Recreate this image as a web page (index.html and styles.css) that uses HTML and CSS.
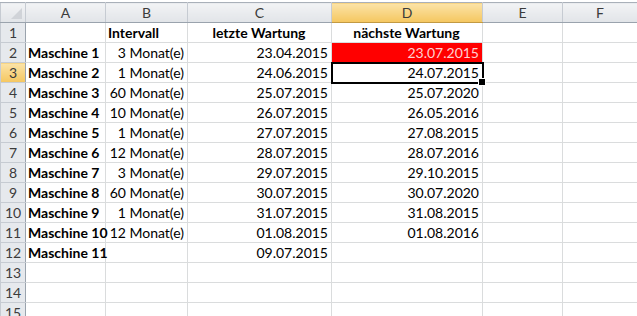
FILE: index.html
```html
<!DOCTYPE html>
<html lang="de">
<head>
    <meta charset="UTF-8">
    <title>Wartung</title>
    <link rel="stylesheet" href="styles.css">
</head>
<body>
    <table class="sheet">
        <colgroup>
            <col class="c-rh">
            <col class="c-a">
            <col class="c-b">
            <col class="c-c">
            <col class="c-d">
            <col class="c-e">
            <col class="c-f">
        </colgroup>
        <thead>
            <tr>
                <th class="corner"><span class="tri"></span></th>
                <th>A</th>
                <th>B</th>
                <th>C</th>
                <th class="sel">D</th>
                <th>E</th>
                <th>F</th>
            </tr>
        </thead>
        <tbody>
            <tr><th>1</th><td></td><td class="bold">Intervall</td><td class="bold center">letzte Wartung</td><td class="bold center">nächste Wartung</td><td></td><td></td></tr>
            <tr><th>2</th><td class="bold">Maschine 1</td><td class="num">3 Monat(e)</td><td class="num">23.04.2015</td><td class="num due">23.07.2015</td><td></td><td></td></tr>
            <tr><th class="sel">3</th><td class="bold">Maschine 2</td><td class="num">1 Monat(e)</td><td class="num">24.06.2015</td><td class="num active">24.07.2015</td><td></td><td></td></tr>
            <tr><th>4</th><td class="bold">Maschine 3</td><td class="num">60 Monat(e)</td><td class="num">25.07.2015</td><td class="num">25.07.2020</td><td></td><td></td></tr>
            <tr><th>5</th><td class="bold">Maschine 4</td><td class="num">10 Monat(e)</td><td class="num">26.07.2015</td><td class="num">26.05.2016</td><td></td><td></td></tr>
            <tr><th>6</th><td class="bold">Maschine 5</td><td class="num">1 Monat(e)</td><td class="num">27.07.2015</td><td class="num">27.08.2015</td><td></td><td></td></tr>
            <tr><th>7</th><td class="bold">Maschine 6</td><td class="num">12 Monat(e)</td><td class="num">28.07.2015</td><td class="num">28.07.2016</td><td></td><td></td></tr>
            <tr><th>8</th><td class="bold">Maschine 7</td><td class="num">3 Monat(e)</td><td class="num">29.07.2015</td><td class="num">29.10.2015</td><td></td><td></td></tr>
            <tr><th>9</th><td class="bold">Maschine 8</td><td class="num">60 Monat(e)</td><td class="num">30.07.2015</td><td class="num">30.07.2020</td><td></td><td></td></tr>
            <tr><th>10</th><td class="bold">Maschine 9</td><td class="num">1 Monat(e)</td><td class="num">31.07.2015</td><td class="num">31.08.2015</td><td></td><td></td></tr>
            <tr><th>11</th><td class="bold">Maschine 10</td><td class="num">12 Monat(e)</td><td class="num">01.08.2015</td><td class="num">01.08.2016</td><td></td><td></td></tr>
            <tr><th>12</th><td class="bold">Maschine 11</td><td></td><td class="num">09.07.2015</td><td></td><td></td><td></td></tr>
            <tr><th>13</th><td></td><td></td><td></td><td></td><td></td><td></td></tr>
            <tr><th>14</th><td></td><td></td><td></td><td></td><td></td><td></td></tr>
            <tr><th>15</th><td></td><td></td><td></td><td></td><td></td><td></td></tr>
        </tbody>
    </table>
</body>
</html>
```

FILE: styles.css
```css
* {
    box-sizing: border-box;
}

body {
    margin: 0;
    padding-top: 2px;
    background: #ffffff;
    font-family: Lato, "Liberation Sans", sans-serif;
    font-size: 14px;
    color: #000;
    overflow: hidden;
}

.sheet {
    border-collapse: collapse;
    table-layout: fixed;
    width: 637px;
}

.c-rh { width: 25px; }
.c-a { width: 80px; }
.c-b { width: 82px; }
.c-c { width: 144px; }
.c-d { width: 151px; }
.c-e { width: 80px; }
.c-f { width: 75px; }

/* column header */
thead th {
    height: 20px;
    padding: 0;
    font-weight: normal;
    font-size: 14px;
    color: #3b3b3b;
    text-align: center;
    background: linear-gradient(#f2f3f5, #e1e4e8);
    border-top: 1px solid #a9b0b9;
    border-bottom: 1px solid #9aa3ad;
    border-left: 1px solid #c6cbd2;
    border-right: 1px solid #c6cbd2;
}

thead th.sel {
    background: linear-gradient(#fbe3a8, #f5c75f);
    border-bottom-color: #c29a43;
}

.corner {
    position: relative;
}

.corner .tri {
    position: absolute;
    right: 3px;
    bottom: 3px;
    width: 0;
    height: 0;
    border-left: 11px solid transparent;
    border-bottom: 11px solid #d0d3d8;
}

/* row header */
tbody th {
    height: 20px;
    padding: 0;
    font-weight: normal;
    font-size: 14px;
    color: #3b3b3b;
    text-align: center;
    background: #e6e9ed;
    border: 1px solid #c6cbd2;
    border-right-color: #9aa3ad;
}

tbody th.sel {
    background: linear-gradient(#fbe3a8, #f5c75f);
}

td {
    height: 20px;
    padding: 0 3px 0 2px;
    border: 1px solid #dadcdd;
    white-space: nowrap;
    overflow: visible;
    vertical-align: bottom;
    line-height: 18px;
}

.bold {
    font-weight: bold;
}

.center {
    text-align: center;
}

.num {
    text-align: right;
}

.due {
    background: #ff0000;
    color: #ffd0d0;
}

.active {
    position: relative;
    outline: 2px solid #000;
    outline-offset: -1px;
}

.active::after {
    content: '';
    position: absolute;
    right: -4px;
    bottom: -4px;
    width: 6px;
    height: 6px;
    background: #000;
    border: 1px solid #fff;
}
```
